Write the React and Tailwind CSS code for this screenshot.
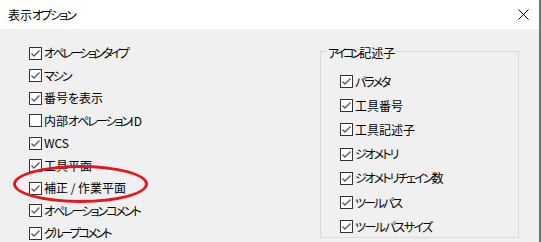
import React from "react";

const font = { fontFamily: '"Meiryo UI","Noto Sans CJK JP","Noto Sans",sans-serif' };

const KANA = /[\u30A0-\u30FF]/;

function Label({ text, kana = "tracking-[-2px]" }) {
  const runs = [];
  for (const ch of text) {
    const k = KANA.test(ch);
    const last = runs[runs.length - 1];
    if (last && last.k === k) last.s += ch;
    else runs.push({ k, s: ch });
  }
  return (
    <span className="text-[12px] leading-[16px] text-black whitespace-nowrap [font-feature-settings:'palt']">
      {runs.map((r, i) =>
        r.k ? (
          <span key={i} className={kana}>
            {r.s}
          </span>
        ) : (
          <span key={i}>{r.s}</span>
        )
      )}
    </span>
  );
}

function Check({ checked }) {
  return (
    <div className="w-[13px] h-[13px] border border-[#333333] bg-white flex-none flex items-center justify-center">
      {checked && (
        <svg width="11" height="11" viewBox="0 0 11 11">
          <polyline points="1.5,5.5 4,8 9.5,2.5" fill="none" stroke="#5a5a5a" strokeWidth="1.4" />
        </svg>
      )}
    </div>
  );
}

function Row({ label, checked = true, h, kana }) {
  return (
    <div className={`flex items-center gap-[2px] ${h}`}>
      <Check checked={checked} />
      <Label text={label} kana={kana} />
    </div>
  );
}

export default function App() {
  const left = [
    ["オペレーションタイプ", true, "tracking-[-2.5px]"],
    ["マシン", true, "tracking-[-2px]"],
    ["番号を表示", true, "tracking-[-2px]"],
    ["内部オペレーションID", false, "tracking-[-2px]"],
    ["WCS", true, "tracking-[-2px]"],
    ["工具平面", true, "tracking-[-2px]"],
    ["補正 / 作業平面", true, "tracking-[-2px]"],
    ["オペレーションコメント", true, "tracking-[-2px]"],
    ["グループコメント", true, "tracking-[-2.5px]"],
  ];
  const right = [
    ["パラメタ", "tracking-[-2px]"],
    ["工具番号", "tracking-[-2px]"],
    ["工具記述子", "tracking-[-2px]"],
    ["ジオメトリ", "tracking-[-2px]"],
    ["ジオメトリチェイン数", "tracking-[-2px]"],
    ["ツールパス", "tracking-[-2px]"],
    ["ツールパスサイズ", "tracking-[-1.5px]"],
  ];
  return (
    <div style={font} className="relative w-[541px] h-[242px] overflow-hidden bg-[#f0f0f0] border-r-2 border-[#707070]">
      <div className="h-[29px] bg-white flex items-center justify-between pl-[8px] pr-[10px]">
        <Label text="表示オプション" kana="tracking-[-2px]" />
        <svg width="11" height="11" viewBox="0 0 11 11">
          <path d="M0.5 0.5 L10.5 10.5 M10.5 0.5 L0.5 10.5" stroke="#000" strokeWidth="1" />
        </svg>
      </div>
      <div className="flex">
        <div className="w-[320px] pl-[29px] pt-[12.75px] flex flex-col">
          {left.map(([l, c, k]) => (
            <Row key={l} label={l} checked={c} kana={k} h="h-[22.5px]" />
          ))}
        </div>
        <fieldset className="mt-[10px] w-[199px] h-[199px] border border-[#dadada] p-0 m-0">
          <legend className="ml-[5px] px-[2px]">
            <Label text="アイコン記述子" kana="tracking-[-3px]" />
          </legend>
          <div className="pl-[19px] pt-[6.5px] flex flex-col">
            {right.map(([l, k]) => (
              <Row key={l} label={l} kana={k} h="h-[24.2px]" />
            ))}
          </div>
        </fieldset>
      </div>
      <div className="absolute left-[13px] top-[165px] w-[135px] h-[38px] rounded-[50%] border-[3px] border-[#e8141c]" />
    </div>
  );
}
